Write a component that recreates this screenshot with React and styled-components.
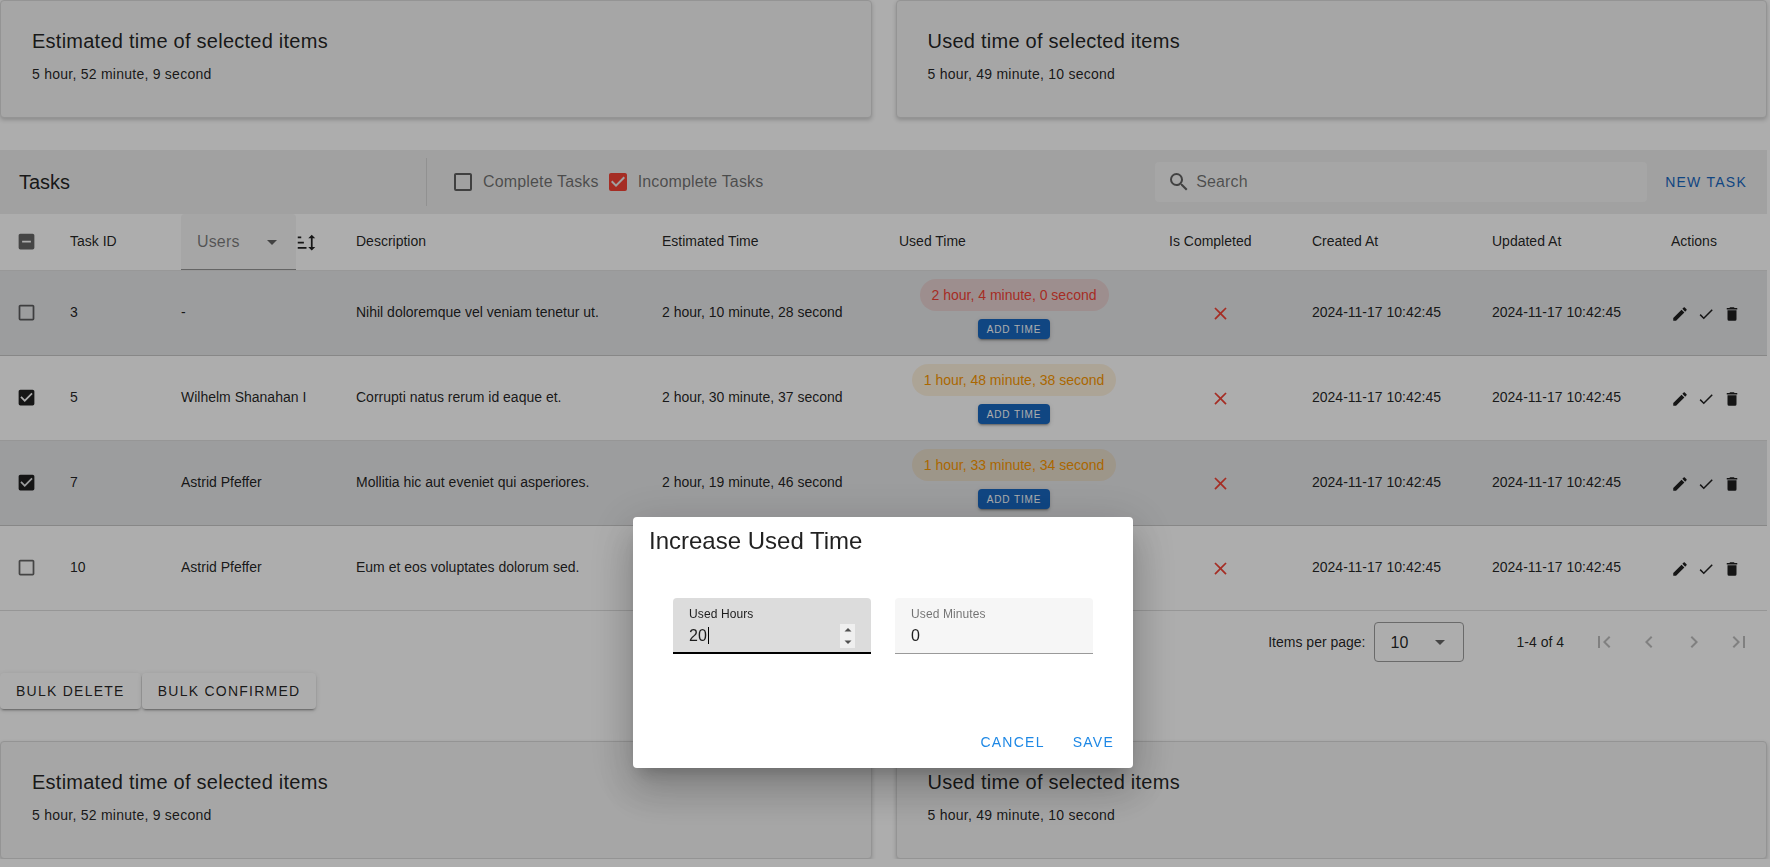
import React, { useState } from "react";
import styled, { createGlobalStyle, css } from "styled-components";

const GlobalStyle = createGlobalStyle`
  *, *::before, *::after { box-sizing: border-box; }
  body {
    margin: 0;
    background: #fff;
    color: rgba(0, 0, 0, 0.87);
    font-family: "Liberation Sans", Arial, sans-serif;
    font-size: 16px;
    line-height: 24px;
    overflow: hidden;
  }
  button, input, select { font-family: inherit; color: inherit; }
`;

const PATHS = {
  boxBlank:
    "M19,3H5C3.89,3 3,3.89 3,5V19A2,2 0 0,0 5,21H19A2,2 0 0,0 21,19V5C21,3.89 20.1,3 19,3M19,5V19H5V5H19Z",
  boxMarked:
    "M10,17L5,12L6.41,10.58L10,14.17L17.59,6.58L19,8M19,3H5C3.89,3 3,3.89 3,5V19A2,2 0 0,0 5,21H19A2,2 0 0,0 21,19V5C21,3.89 20.1,3 19,3Z",
  boxMinus:
    "M17,13H7V11H17M19,3H5C3.89,3 3,3.89 3,5V19A2,2 0 0,0 5,21H19A2,2 0 0,0 21,19V5C21,3.89 20.1,3 19,3Z",
  magnify:
    "M9.5,3A6.5,6.5 0 0,1 16,9.5C16,11.11 15.41,12.59 14.44,13.73L14.71,14H15.5L20.5,19L19,20.5L14,15.5V14.71L13.73,14.44C12.59,15.41 11.11,16 9.5,16A6.5,6.5 0 0,1 3,9.5A6.5,6.5 0 0,1 9.5,3M9.5,5C7,5 5,7 5,9.5C5,12 7,14 9.5,14C12,14 14,12 14,9.5C14,7 12,5 9.5,5Z",
  menuDown: "M7,10L12,15L17,10H7Z",
  pencil:
    "M20.71,7.04C21.1,6.65 21.1,6 20.71,5.63L18.37,3.29C18,2.9 17.35,2.9 16.96,3.29L15.12,5.12L18.87,8.87M3,17.25V21H6.75L17.81,9.93L14.06,6.18L3,17.25Z",
  check: "M21,7L9,19L3.5,13.5L4.91,12.09L9,16.17L19.59,5.59L21,7Z",
  trash: "M19,4H15.5L14.5,3H9.5L8.5,4H5V6H19M6,19A2,2 0 0,0 8,21H16A2,2 0 0,0 18,19V7H6V19Z",
  close:
    "M19,6.41L17.59,5L12,10.59L6.41,5L5,6.41L10.59,12L5,17.59L6.41,19L12,13.41L17.59,19L19,17.59L13.41,12L19,6.41Z",
  first: "M18.41,16.59L13.82,12L18.41,7.41L17,6L11,12L17,18L18.41,16.59M6,6H8V18H6V6Z",
  prev: "M15.41,16.58L10.83,12L15.41,7.41L14,6L8,12L14,18L15.41,16.58Z",
  next: "M8.59,16.58L13.17,12L8.59,7.41L10,6L16,12L10,18L8.59,16.58Z",
  last: "M5.59,7.41L10.18,12L5.59,16.59L7,18L13,12L7,6L5.59,7.41M16,6H18V18H16V6Z",
  sort: "M19 7H22L18 3L14 7H17V17H14L18 21L22 17H19M2 17H12V19H2M6 5V7H2V5M2 11H9V13H2V11Z",
  spinUp: "M5,15L12,8L19,15Z",
  spinDown: "M5,9L12,16L19,9Z",
};

const Svg = styled.svg`
  display: block;
  flex: none;
  width: ${(p) => p.$size}px;
  height: ${(p) => p.$size}px;
  fill: currentColor;
`;
const Icon = ({ name, size = 24 }) => (
  <Svg viewBox="0 0 24 24" $size={size} aria-hidden="true">
    <path d={PATHS[name]} />
  </Svg>
);

const Page = styled.main`
  padding-right: 3px;
`;
const CardRow = styled.section`
  display: grid;
  grid-template-columns: 1fr 1fr;
  gap: 24px;
`;
const Card = styled.article`
  min-height: 118px;
  padding: 24px 31px;
  background: #f5f5f5;
  border: 1px solid #dadada;
  border-radius: 4px;
  box-shadow: 0 2px 4px rgba(0, 0, 0, 0.2);
`;
const CardTitle = styled.h2`
  margin: 0;
  font-size: 20px;
  font-weight: 400;
  line-height: 32px;
  letter-spacing: 0.0125em;
`;
const CardText = styled.p`
  margin: 7px 0 0;
  font-size: 14px;
  line-height: 20px;
  letter-spacing: 0.0178em;
`;

const Tasks = styled.section`
  margin-top: 32px;
`;
const Toolbar = styled.header`
  display: flex;
  align-items: center;
  height: 64px;
  padding: 0 4px 0 19px;
  background: #ededed;
`;
const ToolbarTitle = styled.h1`
  width: 407px;
  margin: 0;
  font-size: 20px;
  font-weight: 400;
  line-height: 28px;
`;
const Divider = styled.div`
  width: 1px;
  height: 48px;
  margin-right: 24px;
  background: #d6d6d6;
`;
const CheckLabel = styled.label`
  position: relative;
  display: inline-flex;
  align-items: center;
  gap: 8px;
  margin-right: 7px;
  color: rgba(0, 0, 0, 0.54);
  letter-spacing: 0.0094em;
  svg { color: ${(p) => p.$color}; }
  input {
    position: absolute;
    inset: 0;
    margin: 0;
    opacity: 0;
  }
`;
const TickCell = styled(CheckLabel)`
  display: flex;
  width: 21px;
  margin: 0;
`;
const SearchBox = styled.label`
  display: flex;
  align-items: center;
  gap: 5px;
  width: 492px;
  height: 40px;
  margin: 0 2px 0 auto;
  padding: 0 12px;
  background: #f5f5f5;
  border-radius: 4px;
  color: rgba(0, 0, 0, 0.6);
  input {
    flex: 1;
    min-width: 0;
    padding: 0;
    border: 0;
    outline: 0;
    background: none;
    font-size: 16px;
    letter-spacing: 0.0094em;
  }
  input::placeholder { color: rgba(0, 0, 0, 0.54); opacity: 1; }
`;
const raised = css`
  box-shadow: 0 3px 1px -2px rgba(0, 0, 0, 0.2), 0 2px 2px rgba(0, 0, 0, 0.14),
    0 1px 5px rgba(0, 0, 0, 0.12);
`;
const Button = styled.button`
  height: 36px;
  padding: 0 16px;
  border: 0;
  border-radius: 4px;
  background: ${(p) => (p.$raised ? "#fff" : "none")};
  color: ${(p) => p.$color || "inherit"};
  font-size: 14px;
  letter-spacing: 0.0893em;
  text-transform: uppercase;
  white-space: nowrap;
  ${(p) => p.$raised && raised}
`;

const Scroller = styled.div`
  overflow-x: auto;
`;
const Table = styled.table`
  width: 100%;
  min-width: 1600px;
  table-layout: fixed;
  border-collapse: separate;
  border-spacing: 0;
  font-size: 14px;
  line-height: 20px;
`;
const Col = styled.col`
  width: ${(p) => p.$w};
`;
const Th = styled.th`
  height: 57px;
  padding: 0 16px ${(p) => (p.$flush ? 0 : 2)}px;
  font-weight: 400;
  text-align: left;
  white-space: nowrap;
  border-bottom: 1px solid #e0e0e0;
`;
const Row = styled.tr`
  background: ${(p) => (p.$shaded ? "#e6e7e9" : "#fff")};
`;
const Td = styled.td`
  height: 85px;
  padding: 0 ${(p) => (p.$center ? 24 : 16)}px ${(p) => (p.$icons ? 0 : 2)}px 16px;
  border-bottom: 1px solid ${(p) => (p.$shaded ? "#c8c8c8" : "#dedede")};
  white-space: nowrap;
`;
const UserHead = styled.div`
  display: flex;
  align-items: center;
`;
const UserSelect = styled.div`
  position: relative;
  width: 115px;
  flex: none;
  select {
    display: block;
    width: 100%;
    height: 56px;
    padding: 0 16px;
    appearance: none;
    border: 0;
    border-bottom: 1px solid #959595;
    border-radius: 4px 4px 0 0;
    background: #f5f5f5;
    color: rgba(0, 0, 0, 0.5);
    font-size: 16px;
    letter-spacing: 0.0094em;
  }
  svg {
    position: absolute;
    top: 16px;
    right: 12px;
    color: rgba(0, 0, 0, 0.6);
    pointer-events: none;
  }
`;
const UsedStack = styled.div`
  display: flex;
  flex-direction: column;
  align-items: center;
  gap: 8px;
  padding-bottom: 6px;
`;
const TONES = { red: "#f44336", amber: "#fb9800" };
const TINTS = { red: "rgba(244, 67, 54, 0.13)", amber: "rgba(251, 152, 0, 0.13)" };
const Chip = styled.span`
  padding: 0 12px;
  border-radius: 16px;
  line-height: 32px;
  background: ${(p) => TINTS[p.$tone]};
  color: ${(p) => TONES[p.$tone]};
`;
const AddButton = styled(Button)`
  min-width: 72px;
  height: 20px;
  padding: 0 8px;
  background: #1867c0;
  color: #fff;
  font-size: 10px;
  font-weight: 500;
  ${raised}
`;
const Centered = styled.div`
  display: flex;
  justify-content: center;
  padding-top: 1px;
  color: #f44336;
`;
const Actions = styled.div`
  display: flex;
  gap: 8px;
  padding-top: 1px;
`;
const IconButton = styled.button`
  display: grid;
  place-items: center;
  width: ${(p) => p.$size}px;
  height: ${(p) => p.$size}px;
  padding: 0;
  border: 0;
  background: none;
  &:disabled { color: rgba(0, 0, 0, 0.26); }
`;

const Footer = styled.div`
  display: flex;
  align-items: center;
  justify-content: flex-end;
  height: 62px;
  padding-right: 8px;
  font-size: 14px;
`;
const PageSelect = styled.div`
  position: relative;
  margin: 0 53px 0 8px;
  select {
    display: block;
    width: 90px;
    height: 40px;
    padding: 0 16px;
    appearance: none;
    border: 1px solid #9c9c9c;
    border-radius: 4px;
    background: none;
    font-size: 16px;
  }
  svg {
    position: absolute;
    top: 8px;
    right: 12px;
    color: rgba(0, 0, 0, 0.6);
    pointer-events: none;
  }
`;
const Pager = styled.nav`
  display: flex;
  gap: 5px;
  margin-left: 20px;
`;
const BulkBar = styled.div`
  display: flex;
  gap: 1px;
  margin-bottom: 32px;
`;

const Scrim = styled.div`
  position: fixed;
  inset: 0;
  display: flex;
  justify-content: center;
  align-items: flex-start;
  padding: 517px 4px 0 0;
  background: rgba(0, 0, 0, 0.32);
`;
const Dialog = styled.form`
  display: flex;
  flex-direction: column;
  width: 500px;
  min-height: 251px;
  background: #fff;
  border-radius: 4px;
  box-shadow: 0 11px 15px -7px rgba(0, 0, 0, 0.2), 0 24px 38px 3px rgba(0, 0, 0, 0.14),
    0 9px 46px 8px rgba(0, 0, 0, 0.12);
`;
const DialogTitle = styled.h2`
  margin: 0;
  padding: 8px 16px;
  font-size: 24px;
  font-weight: 400;
  line-height: 32px;
`;
const FieldRow = styled.div`
  display: grid;
  grid-template-columns: 1fr 1fr;
  gap: 24px;
  padding: 33px 40px 0;
`;
const Field = styled.div`
  position: relative;
  height: 56px;
  padding: 7px 16px 0;
  border-radius: 4px 4px 0 0;
  background: ${(p) => (p.$focused ? "#dcdcdc" : "#f6f6f6")};
  border-bottom: ${(p) => (p.$focused ? "2px solid #000" : "1px solid #9a9a9a")};
  color: ${(p) => (p.$focused ? "rgba(0,0,0,.87)" : "rgba(0,0,0,.54)")};
  font-size: 12px;
  line-height: 18px;
  letter-spacing: 0.0094em;
  label { display: block; }
  input {
    display: block;
    width: 100%;
    height: 26px;
    padding: 0;
    border: 0;
    outline: 0;
    background: none;
    appearance: textfield;
    caret-color: transparent;
    color: rgba(0, 0, 0, 0.87);
    font-size: 16px;
  }
  input::-webkit-inner-spin-button { display: none; }
`;
const Caret = styled.span`
  position: absolute;
  top: 29px;
  left: calc(17px + ${(p) => p.$chars}ch);
  width: 1px;
  height: 17px;
  background: #000;
  font-size: 16px;
`;
const Spinner = styled.div`
  position: absolute;
  top: 26px;
  right: 16px;
  display: grid;
  width: 15px;
  height: 24px;
  background: #efefef;
  color: #505050;
  button {
    display: grid;
    place-items: center;
    padding: 0;
    border: 0;
    background: none;
    overflow: hidden;
  }
`;
const DialogActions = styled.div`
  display: flex;
  justify-content: flex-end;
  margin-top: auto;
  padding: 8px 5px;
  button { padding: 0 14px; }
`;

const TASKS = [
  { id: 3, user: "-", text: "Nihil doloremque vel veniam tenetur ut.", est: "2 hour, 10 minute, 28 second", used: "2 hour, 4 minute, 0 second", tone: "red" },
  { id: 5, user: "Wilhelm Shanahan I", text: "Corrupti natus rerum id eaque et.", est: "2 hour, 30 minute, 37 second", used: "1 hour, 48 minute, 38 second", tone: "amber" },
  { id: 7, user: "Astrid Pfeffer", text: "Mollitia hic aut eveniet qui asperiores.", est: "2 hour, 19 minute, 46 second", used: "1 hour, 33 minute, 34 second", tone: "amber" },
  { id: 10, user: "Astrid Pfeffer", text: "Eum et eos voluptates dolorum sed.", est: "", used: "", tone: "amber" },
];
const STAMP = "2024-11-17 10:42:45";
const WIDTHS = ["54px", "111px", "175px", "auto", "237px", "270px", "143px", "180px", "179px", "112px"];

const Tick = ({ checked, onChange, icon, color, label, children }) => {
  const Wrap = children ? CheckLabel : TickCell;
  return (
    <Wrap $color={color}>
      <input type="checkbox" checked={checked} onChange={onChange} aria-label={label} />
      <Icon name={icon || (checked ? "boxMarked" : "boxBlank")} size={children ? 24 : 21} />
      {children}
    </Wrap>
  );
};

const Summary = () => (
  <CardRow>
    <Card>
      <CardTitle>Estimated time of selected items</CardTitle>
      <CardText>5 hour, 52 minute, 9 second</CardText>
    </Card>
    <Card>
      <CardTitle>Used time of selected items</CardTitle>
      <CardText>5 hour, 49 minute, 10 second</CardText>
    </Card>
  </CardRow>
);

export default function App() {
  const [selected, setSelected] = useState([5, 7]);
  const [complete, setComplete] = useState(false);
  const [incomplete, setIncomplete] = useState(true);
  const [hours, setHours] = useState("20");
  const [minutes, setMinutes] = useState("0");
  const toggle = (id) =>
    setSelected((s) => (s.includes(id) ? s.filter((x) => x !== id) : [...s, id]));
  const step = (by) => setHours((h) => String(Number(h) + by));

  return (
    <>
      <GlobalStyle />
      <Page>
        <Summary />
        <Tasks>
          <Toolbar>
            <ToolbarTitle>Tasks</ToolbarTitle>
            <Divider />
            <Tick checked={complete} onChange={() => setComplete(!complete)} color="rgba(0,0,0,.6)">
              Complete Tasks
            </Tick>
            <Tick checked={incomplete} onChange={() => setIncomplete(!incomplete)} color="#f44336">
              Incomplete Tasks
            </Tick>
            <SearchBox>
              <Icon name="magnify" />
              <input type="text" placeholder="Search" aria-label="Search" />
            </SearchBox>
            <Button type="button" $color="#1867c0">New Task</Button>
          </Toolbar>
          <Scroller>
            <Table>
              <colgroup>
                {WIDTHS.map((w, i) => <Col key={i} $w={w} />)}
              </colgroup>
              <thead>
                <tr>
                  <Th>
                    <Tick checked={selected.length === TASKS.length} icon="boxMinus" color="rgba(0,0,0,.6)" label="Select all"
                      onChange={() => setSelected(TASKS.map((t) => t.id))} />
                  </Th>
                  <Th>Task ID</Th>
                  <Th $flush>
                    <UserHead>
                      <UserSelect>
                        <select aria-label="Users"><option>Users</option></select>
                        <Icon name="menuDown" />
                      </UserSelect>
                      <Icon name="sort" size={21} />
                    </UserHead>
                  </Th>
                  <Th>Description</Th>
                  <Th>Estimated Time</Th>
                  <Th>Used Time</Th>
                  <Th>Is Completed</Th>
                  <Th>Created At</Th>
                  <Th>Updated At</Th>
                  <Th>Actions</Th>
                </tr>
              </thead>
              <tbody>
                {TASKS.map((t, i) => {
                  const shaded = i % 2 === 0;
                  const on = selected.includes(t.id);
                  return (
                    <Row key={t.id} $shaded={shaded}>
                      <Td $shaded={shaded}>
                        <Tick checked={on} onChange={() => toggle(t.id)} label={`Select task ${t.id}`}
                          color={on ? "rgba(0,0,0,.87)" : "rgba(0,0,0,.6)"} />
                      </Td>
                      <Td $shaded={shaded}>{t.id}</Td>
                      <Td $shaded={shaded}>{t.user}</Td>
                      <Td $shaded={shaded}>{t.text}</Td>
                      <Td $shaded={shaded}>{t.est}</Td>
                      <Td $shaded={shaded} $center>
                        {t.used && (
                          <UsedStack>
                            <Chip $tone={t.tone}>{t.used}</Chip>
                            <AddButton type="button">Add Time</AddButton>
                          </UsedStack>
                        )}
                      </Td>
                      <Td $shaded={shaded} $center $icons>
                        <Centered><Icon name="close" size={21} /></Centered>
                      </Td>
                      <Td $shaded={shaded}>{STAMP}</Td>
                      <Td $shaded={shaded}>{STAMP}</Td>
                      <Td $shaded={shaded} $icons>
                        <Actions>
                          <IconButton type="button" $size={18} aria-label="Edit"><Icon name="pencil" size={18} /></IconButton>
                          <IconButton type="button" $size={18} aria-label="Complete"><Icon name="check" size={18} /></IconButton>
                          <IconButton type="button" $size={18} aria-label="Delete"><Icon name="trash" size={18} /></IconButton>
                        </Actions>
                      </Td>
                    </Row>
                  );
                })}
              </tbody>
            </Table>
          </Scroller>
          <Footer>
            <label htmlFor="per-page">Items per page:</label>
            <PageSelect>
              <select id="per-page"><option>10</option></select>
              <Icon name="menuDown" />
            </PageSelect>
            <span>1-4 of 4</span>
            <Pager aria-label="Pagination">
              <IconButton type="button" $size={40} disabled aria-label="First page"><Icon name="first" /></IconButton>
              <IconButton type="button" $size={40} disabled aria-label="Previous page"><Icon name="prev" /></IconButton>
              <IconButton type="button" $size={40} disabled aria-label="Next page"><Icon name="next" /></IconButton>
              <IconButton type="button" $size={40} disabled aria-label="Last page"><Icon name="last" /></IconButton>
            </Pager>
          </Footer>
          <BulkBar>
            <Button type="button" $raised>Bulk Delete</Button>
            <Button type="button" $raised>Bulk Confirmed</Button>
          </BulkBar>
        </Tasks>
        <Summary />
      </Page>
      <Scrim>
        <Dialog role="dialog" aria-labelledby="dialog-title" onSubmit={(e) => e.preventDefault()}>
          <DialogTitle id="dialog-title">Increase Used Time</DialogTitle>
          <FieldRow>
            <Field $focused>
              <label htmlFor="hours">Used Hours</label>
              <input id="hours" type="number" autoFocus value={hours} onChange={(e) => setHours(e.target.value)} />
              <Caret $chars={hours.length} />
              <Spinner>
                <button type="button" aria-label="Increase hours" onClick={() => step(1)}><Icon name="spinUp" size={12} /></button>
                <button type="button" aria-label="Decrease hours" onClick={() => step(-1)}><Icon name="spinDown" size={12} /></button>
              </Spinner>
            </Field>
            <Field>
              <label htmlFor="minutes">Used Minutes</label>
              <input id="minutes" type="number" value={minutes} onChange={(e) => setMinutes(e.target.value)} />
            </Field>
          </FieldRow>
          <DialogActions>
            <Button type="button" $color="#1e88e5">Cancel</Button>
            <Button type="submit" $color="#1e88e5">Save</Button>
          </DialogActions>
        </Dialog>
      </Scrim>
    </>
  );
}
